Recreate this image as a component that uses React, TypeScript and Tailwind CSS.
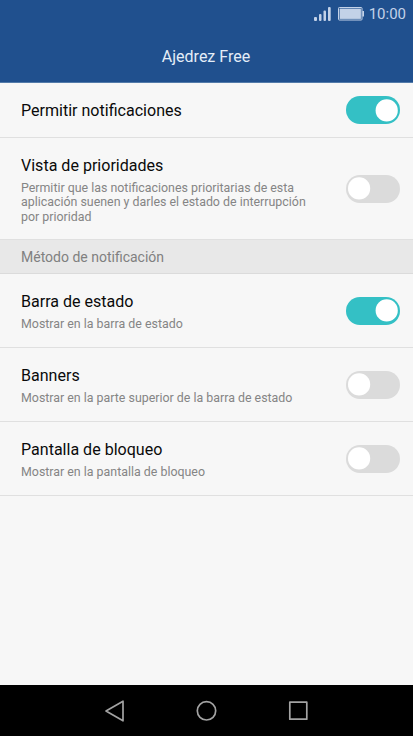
import { useState } from 'react'
import clsx from 'clsx'

interface ToggleProps {
  checked: boolean
  label: string
  onChange: () => void
}

function Toggle({ checked, label, onChange }: ToggleProps) {
  return (
    <button
      type="button"
      role="switch"
      aria-checked={checked}
      aria-label={label}
      onClick={onChange}
      className={clsx(
        'flex h-7 w-[54px] shrink-0 items-center rounded-full px-[2px]',
        checked ? 'justify-end bg-[#34c0c5]' : 'justify-start bg-[#dbdbdb]',
      )}
    >
      <svg width="23" height="23" viewBox="0 0 23 23" className="text-white">
        <circle cx={checked ? 11.7 : 11.1} cy="11.4" r="11.1" fill="currentColor" />
      </svg>
    </button>
  )
}

interface SettingRowProps {
  title: string
  description?: string
  className: string
  defaultChecked?: boolean
}

function SettingRow({ title, description, className, defaultChecked = false }: SettingRowProps) {
  const [checked, setChecked] = useState(defaultChecked)

  return (
    <div className={clsx('flex items-center justify-between border-b border-[#e0e0e0] pr-[13px] pl-[21px]', className)}>
      <div className={clsx('w-[300px]', description ? 'pt-[3px]' : 'pt-px')}>
        <h2 className="text-[16.06px] leading-5 text-[#0a0a0a]">{title}</h2>
        {description && (
          <p className="mt-[5px] text-[12.4px] leading-[14.4px] text-[#858585]">{description}</p>
        )}
      </div>
      <Toggle checked={checked} label={title} onChange={() => setChecked(!checked)} />
    </div>
  )
}

function StatusBar() {
  return (
    <div className="flex h-7 items-center justify-end pr-[7px] text-[#c3d2e8]">
      <svg width="18" height="14" viewBox="0 0 18 14" fill="currentColor" className="mr-[6px]">
        <rect x="0" y="10" width="3" height="4" rx="1" />
        <rect x="5" y="7" width="2.5" height="7" rx="1" />
        <rect x="9.5" y="3.5" width="2.5" height="10.5" rx="1" />
        <rect x="14" y="0" width="2.7" height="14" rx="1" />
      </svg>
      <svg width="27" height="14" viewBox="0 0 27 14" className="mr-[4px]">
        <rect x="0.5" y="0.5" width="23.5" height="12.5" rx="0.8" fill="none" stroke="currentColor" />
        <rect x="1.6" y="1.6" width="21.3" height="10.3" fill="currentColor" />
        <rect x="24.4" y="4" width="1.6" height="5.5" fill="currentColor" />
      </svg>
      <span className="text-[15px] leading-4">10:00</span>
    </div>
  )
}

function NavBar() {
  return (
    <nav className="flex h-[51px] items-center justify-center gap-[70px] bg-black pr-px text-[#a3a3a3]">
      <svg width="22" height="24" viewBox="0 0 22 24" fill="none" stroke="currentColor" strokeWidth="1.7" strokeLinejoin="round">
        <path d="M20 2.2v19.6L3 12z" />
      </svg>
      <svg width="22" height="24" viewBox="0 0 22 24" fill="none" stroke="currentColor" strokeWidth="1.7">
        <circle cx="11.5" cy="11.8" r="9.2" />
      </svg>
      <svg width="22" height="24" viewBox="0 0 22 24" fill="none" stroke="currentColor" strokeWidth="1.7" strokeLinejoin="round">
        <rect x="2.8" y="3.2" width="17" height="17" />
      </svg>
    </nav>
  )
}

export default function App() {
  return (
    <div className="flex h-[736px] w-[413px] flex-col overflow-hidden bg-[#f7f7f7] font-['Roboto',sans-serif]">
      <header className="h-[83px] border-b border-[#537baa] bg-[#20508e]">
        <StatusBar />
        <h1 className="flex h-[54px] items-center justify-center pt-[3px] pr-px text-[16px] text-[#e4edf8]">Ajedrez Free</h1>
      </header>
      <main className="flex-1">
        <SettingRow title="Permitir notificaciones" className="h-[55px]" defaultChecked />
        <SettingRow
          title="Vista de prioridades"
          description="Permitir que las notificaciones prioritarias de esta aplicación suenen y darles el estado de interrupción por prioridad"
          className="h-[102px]"
        />
        <div className="flex h-[34px] items-center border-b border-[#dbdbdb] bg-[#e8e8e8] pt-[2px] pl-[21px] text-[14px] text-[#808080]">
          Método de notificación
        </div>
        <SettingRow
          title="Barra de estado"
          description="Mostrar en la barra de estado"
          className="h-[74px]"
          defaultChecked
        />
        <SettingRow
          title="Banners"
          description="Mostrar en la parte superior de la barra de estado"
          className="h-[74px]"
        />
        <SettingRow
          title="Pantalla de bloqueo"
          description="Mostrar en la pantalla de bloqueo"
          className="h-[74px]"
        />
      </main>
      <NavBar />
    </div>
  )
}
